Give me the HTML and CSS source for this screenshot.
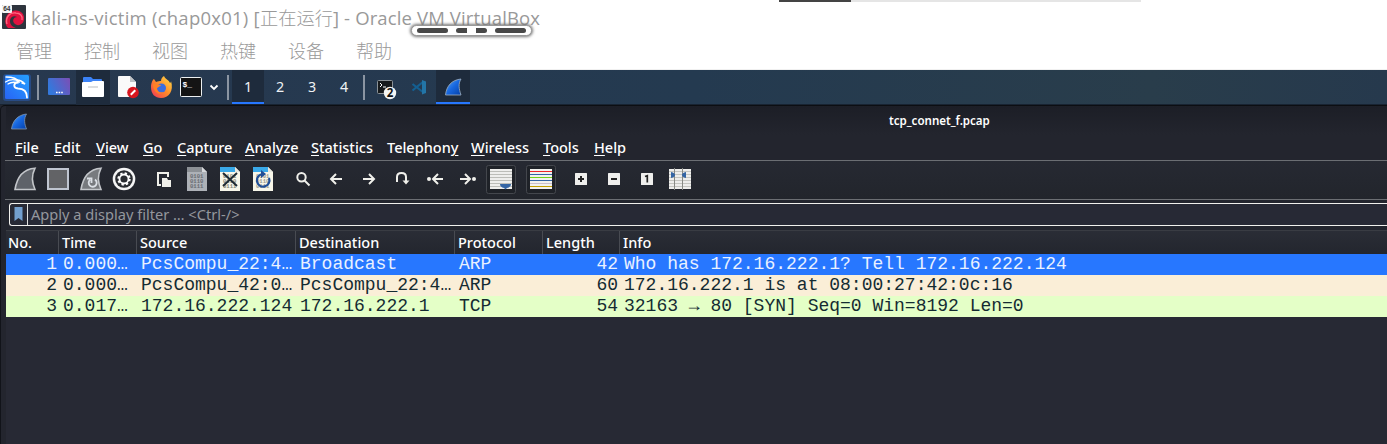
FILE: index.html
```html
<!DOCTYPE html>
<html lang="zh-CN">
<head>
<meta charset="utf-8">
<title>kali-ns-victim</title>
<link rel="stylesheet" href="styles.css">
</head>
<body>
<svg class="defs" width="0" height="0">
  <defs>
    <linearGradient id="blue" x1="0" y1="0" x2="1" y2="1"><stop offset="0" stop-color="#5aa5f2"/><stop offset=".5" stop-color="#1767df"/><stop offset="1" stop-color="#0540a8"/></linearGradient>
    <linearGradient id="kali" x1="0" y1="1" x2="1" y2="0"><stop offset="0" stop-color="#2864f5"/><stop offset="1" stop-color="#25a0ff"/></linearGradient>
    <linearGradient id="desk" x1="0" y1="0.4" x2="1" y2="0"><stop offset="0" stop-color="#3478dc"/><stop offset="1" stop-color="#7c4eb5"/></linearGradient>
    <linearGradient id="fox" x1="1" y1="0" x2="0" y2="1"><stop offset="0" stop-color="#ffe14a"/><stop offset=".5" stop-color="#ff8a2a"/><stop offset="1" stop-color="#f0305c"/></linearGradient>
    <g id="bits" font-family="Liberation Mono" font-size="5.6" font-weight="bold"><text x="10" y="15">0101</text><text x="10" y="19.8">0110</text><text x="10" y="24.6">0111</text></g>
  </defs>
</svg>

<header class="host">
  <div class="progress"><div class="progress-done"></div></div>
  <div class="host-title">
    <svg width="24" height="24" viewBox="0 0 24 24"><rect width="24" height="24" rx="1" fill="#2e343d"/><path d="M6 23C1 18 3 8 11 6c7-2 12 3 11 9-1 5-7 7-10 3-2-3 0-6 3-6-3-2-7 0-7 4s3 6 6 7z" fill="#e0123f"/><path d="M5 19C3 12 8 7 14 8c4 0 7 3 6 7" fill="none" stroke="#ff6680" stroke-width="1.4"/><rect width="10" height="8" rx="1" fill="#f4f4f4"/><text x="1.2" y="6.3" font-family="Liberation Sans" font-weight="bold" font-size="6.5" fill="#333">64</text></svg>
    <span class="host-name"><span class="t1">kali-ns-victim (chap0x01) [</span><span class="t2">正在运行</span><span class="t3">] - Oracle VM VirtualBox</span></span>
  </div>
  <nav class="host-menu"><span>管理</span><span>控制</span><span>视图</span><span>热键</span><span>设备</span><span>帮助</span></nav>
  <div class="grip"><i></i><i class="mid"></i><i></i></div>
</header>

<div class="panel">
  <svg class="apps" width="228" height="35" viewBox="0 0 228 35">
    <rect x="76" width="34" height="35" fill="#1e2b3c"/>
    <rect x="3" y="4" width="28" height="27" rx="3" fill="#2b78ff" opacity=".3"/>
    <rect x="5" y="5" width="24" height="24" rx="1.5" fill="url(#kali)"/>
    <g fill="none" stroke="#fff" stroke-linecap="round"><path d="M6 7c6 0 11 1 13 5M5.500 12c5-3 10-3 14 0M8 14c3-2 7-2 10-1" stroke-width="1.3"/><path d="M18 12c-5 1-5 6 0 6.500 6 0 9 3 9 9" stroke-width="1.8"/><path d="M17 10c3 0 5 1 8 4l-3-1" stroke-width="1.5"/></g>
    <path d="M38 5v25" stroke="#8b95a2" stroke-width="2"/>
    <rect x="48" y="8" width="22" height="17" rx="1" fill="url(#desk)"/><path d="M56 22.500h1.600m1 0h1.600m1 0h1.600" stroke="#fff" stroke-width="1.5"/>
    <path d="M83 17V8q0-1 1-1h7l2 2h8q1 0 1 1v7z" fill="#3b82f6"/><path d="M82 13q0-1 1-1h8l2-1h10q1 0 1 1v14q0 1-1 1H83q-1 0-1-1z" fill="#fff"/><path d="M88 17h10" stroke="#c9cdd0" stroke-width="1.3"/>
    <path d="M119 6h11l6 6v14q0 1-1 1h-16q-1 0-1-1V7q0-1 1-1z" fill="#fafafa"/><path d="M130 6v6h6z" fill="#bfc2c5"/><circle cx="133" cy="22.500" r="5.800" fill="#d9161f"/><path d="m130.800 24.700 4.500-4.500" stroke="#fff" stroke-width="2"/>
    <path d="M151 17c0-4 2-8 3-8l2 3c2-1 4-1 5-1 0-2 1-4 3-5 1 3 5 4 6 7 1-1 1-1 1-2 3 10-2 17-10 17-6 0-10-4-10-11z" fill="url(#fox)"/><circle cx="161.500" cy="18" r="4.500" fill="#3a6de0"/><path d="M153 14c3-1 5 1 8 1-1 2-4 2-4 4 0 3 4 4 7 3-5 4-11 0-11-8z" fill="#ff8125"/>
    <rect x="180.500" y="7.500" width="21" height="19" rx="1" fill="#141414" stroke="#edf0f1"/><text x="182.500" y="16.500" font-family="Liberation Mono" font-weight="bold" font-size="8" fill="#fff">$_</text>
    <path d="m210.500 15.500 3.500 3.500 3.500-3.500" fill="none" stroke="#fff" stroke-width="1.8"/>
    <path d="M228 5v25" stroke="#8b95a2" stroke-width="2"/>
  </svg>
  <div class="workspaces"><span class="active">1</span><span>2</span><span>3</span><span>4</span></div>
  <svg width="110" height="35" viewBox="362 0 110 35">
    <path d="M364 5v25" stroke="#8b95a2" stroke-width="2"/>
    <rect x="377.500" y="10.500" width="15" height="13" rx="1" fill="#171a1c" stroke="#8c9398"/><path d="m380 13 2 2-2 2m3 0h3" fill="none" stroke="#fff"/><circle cx="390" cy="23" r="6.200" fill="#f5f6f4"/><text x="390" y="27.300" text-anchor="middle" font-family="Noto Sans" font-weight="bold" font-size="11.500" fill="#111">2</text>
    <path d="m412.500 14 11 8.500M412.500 20.500l11-9" fill="none" stroke="#145f91" stroke-width="2.200"/><path d="m422 10 4 1.500v11.500l-4 1.500z" fill="#2375a7"/>
    <rect x="436" width="34" height="35" fill="#1e2b3c"/><rect x="436" y="32" width="34" height="2" fill="#2777ff"/>
    <path d="M445.500 25c1-9 6-15 15.500-16-3 5-2 10 0 16z" fill="url(#blue)" stroke="#9fb0c0" stroke-width=".8"/>
  </svg>
</div>

<main class="window">
  <div class="titlebar"><svg width="18" height="18" viewBox="0 0 18 18"><path d="M1.500 17c1-8 6-14 15-15-3 5-2 10 0 15z" fill="url(#blue)" stroke="#8195ac" stroke-width=".8"/></svg><span>tcp_connet_f.pcap</span></div>
  <nav class="menu">
    <span style="width:39px"><u>F</u>ile</span><span style="width:42px"><u>E</u>dit</span><span style="width:47px"><u>V</u>iew</span><span style="width:34px"><u>G</u>o</span><span style="width:68px"><u>C</u>apture</span><span style="width:66px"><u>A</u>nalyze</span><span style="width:76px"><u>S</u>tatistics</span><span style="width:84px">Telephon<u>y</u></span><span style="width:72px"><u>W</u>ireless</span><span style="width:51px"><u>T</u>ools</span><span style="width:40px"><u>H</u>elp</span>
  </nav>
  <div class="toolbar">
    <div class="group">
      <svg viewBox="0 0 33 33"><path d="M7 26.500C9 14 15 6 27 5.200c-4 8-3 14 0 21.300z" fill="#5e6269" stroke="#c3c6ca" stroke-width="1.600"/></svg>
      <svg viewBox="0 0 33 33"><rect x="7" y="6" width="20" height="20" fill="#626366" stroke="#bfc5d0" stroke-width="2"/></svg>
      <svg viewBox="0 0 33 33"><path d="M7 26.500C9 14 15 6 27 5.200c-4 8-3 14 0 21.300z" fill="#777a7e" stroke="#c3c6ca" stroke-width="1.600"/><path d="M21 16.500a4 4 0 1 1-5 .3M13 15.500h4.500V20" fill="none" stroke="#dce0e6" stroke-width="1.800"/></svg>
      <svg viewBox="0 0 33 33"><circle cx="17" cy="16" r="11.300" fill="#f5f5f5"/><circle cx="17" cy="16" r="8.800" fill="#292c31"/><circle cx="17" cy="16" r="5.700" fill="none" stroke="#fff" stroke-width="2" stroke-dasharray="2.300 2.177"/><circle cx="17" cy="16" r="4.500" fill="none" stroke="#fff" stroke-width="1.800"/></svg>
    </div>
    <div class="group">
      <svg viewBox="0 0 33 33"><path d="M14 22h-3V10h10v4" fill="none" stroke="#efefe9" stroke-width="2"/><path d="M15 15h5l1 2h3v7h-9z" fill="#efefe9"/></svg>
      <svg viewBox="0 0 33 33"><path d="M7 4h15l5 5v19H7z" fill="#adb1b7"/><path d="M7 4h15v5H7z" fill="#8c9095"/><path d="M22 4v5h5z" fill="#d7d9dc"/><use href="#bits" fill="#686c72"/></svg>
      <svg viewBox="0 0 33 33"><path d="M7 4h15l5 5v19H7z" fill="#f7f6e9"/><path d="M7 4h15v5H7z" fill="#3aa9e8"/><path d="M22 4v5h5z" fill="#e6e7df"/><use href="#bits" fill="#858677"/><path d="m10 10 14 13m0-13L10 23" stroke="#1e2a33" stroke-width="2"/></svg>
      <svg viewBox="0 0 33 33"><path d="M7 4h15l5 5v19H7z" fill="#f7f6e9"/><path d="M7 4h15v5H7z" fill="#3aa9e8"/><path d="M22 4v5h5z" fill="#e6e7df"/><use href="#bits" fill="#9b9b8f"/><path d="M23 15a6.300 6.300 0 1 1-6-4" fill="none" stroke="#214f96" stroke-width="2.200"/><path d="m15 7 5 4-5 4z" fill="#214f96"/></svg>
    </div>
    <div class="group white">
      <svg viewBox="0 0 33 33"><circle cx="15.500" cy="14.300" r="4.200"/><path d="m18.500 17.500 5 5"/></svg>
      <svg viewBox="0 0 33 33"><path d="M23 16H12m5-5-5 5 5 5"/></svg>
      <svg viewBox="0 0 33 33"><path d="M11 16h11m-5-5 5 5-5 5"/></svg>
      <svg viewBox="0 0 33 33"><path d="M12 19v-5q0-4 4.500-4t4.500 4v6"/><path d="M17.500 17.500h7L21 21.500z" class="solid"/></svg>
      <svg viewBox="0 0 33 33"><path d="M25 16H15m5-5-5 5 5 5"/><circle cx="11" cy="16" r="2" class="solid"/></svg>
      <svg viewBox="0 0 33 33"><path d="M9 16h10m-5-5 5 5-5 5"/><circle cx="23" cy="16" r="2" class="solid"/></svg>
      <svg viewBox="0 0 33 33" class="button"><rect x="2.500" y="2.500" width="29" height="28" rx="2" class="frame"/><rect x="6" y="6" width="22" height="20" fill="#eeeeec"/><path d="M6 8.500h22M6 11.500h22M6 14.500h22M6 17.500h22M6 20.500h22M6 23.500h22" stroke="#bcbdb8" stroke-width="1"/><path d="M16 21h11q0 3-4 4l-1.500 1.500L20 25q-4-1-4-4z" fill="#3465a4"/></svg>
    </div>
    <div class="group">
      <svg viewBox="0 0 33 33" class="button"><rect x="2.500" y="2.500" width="29" height="28" rx="2" class="frame"/><rect x="6" y="6" width="22" height="20" fill="#f2f2ef"/><path d="M6 8.500h22" stroke="#ef2929"/><path d="M6 11.500h22M6 17.500h22" stroke="#3465a4"/><path d="M6 14.500h22" stroke="#73d216"/><path d="M6 20.500h22" stroke="#75507b" opacity=".3"/><path d="M6 23.500h22" stroke="#c4a000"/></svg>
    </div>
    <div class="group">
      <svg viewBox="0 0 33 33"><rect x="11" y="10" width="12" height="12" rx=".5" fill="#efefed"/><path d="M14 16h6m-3-3v6" stroke="#222" stroke-width="2"/></svg>
      <svg viewBox="0 0 33 33"><rect x="11" y="10" width="12" height="12" rx=".5" fill="#efefed"/><path d="M14 16h6" stroke="#222" stroke-width="2"/></svg>
      <svg viewBox="0 0 33 33"><rect x="11" y="10" width="12" height="12" rx=".5" fill="#efefed"/><path d="m15 13.500 2.300-.8V19.500" fill="none" stroke="#222" stroke-width="1.700"/></svg>
      <svg viewBox="0 0 33 33"><rect x="6" y="6" width="22" height="20" fill="#eeeeec"/><path d="M6 8.500h22M6 11.500h22M6 14.500h22M6 17.500h22M6 20.500h22M6 23.500h22" stroke="#c5c6c1"/><path d="M11.500 5v22m8-22v22" stroke="#888a85"/><path d="M8 9q4 1 4 3t-4 3zm15 0q-4 1-4 3t4 3z" fill="#3465a4"/></svg>
    </div>
  </div>
  <div class="filter"><div class="filter-box"><div class="bookmark"><svg width="9" height="15" viewBox="0 0 9 15"><path d="M.500 0h8v14l-4-3-4 3z" fill="#729fcf"/></svg></div><span>Apply a display filter … &lt;Ctrl-/&gt;</span></div></div>
  <section class="packets">
    <div class="row head"><span>No.</span><span>Time</span><span>Source</span><span>Destination</span><span>Protocol</span><span>Length</span><span>Info</span></div>
    <div class="row selected"><span>1</span><span>0.000…</span><span>PcsCompu_22:4…</span><span>Broadcast</span><span>ARP</span><span>42</span><span>Who has 172.16.222.1? Tell 172.16.222.124</span></div>
    <div class="row arp"><span>2</span><span>0.000…</span><span>PcsCompu_42:0…</span><span>PcsCompu_22:4…</span><span>ARP</span><span>60</span><span>172.16.222.1 is at 08:00:27:42:0c:16</span></div>
    <div class="row tcp"><span>3</span><span>0.017…</span><span>172.16.222.124</span><span>172.16.222.1</span><span>TCP</span><span>54</span><span>32163 → 80 [SYN] Seq=0 Win=8192 Len=0</span></div>
  </section>
</main>
</body>
</html>
```
FILE: styles.css
```css
* { box-sizing: border-box; }
body { margin: 0; width: 1387px; height: 444px; overflow: hidden; background: #23262f; font-family: "Noto Sans", sans-serif; }
svg { display: block; flex: none; }
.defs { position: absolute; }

.host { position: relative; height: 70px; background: #fff; border-bottom: 1px solid #f0f0f0; color: #999; font-family: "Open Sans", "Noto Sans CJK SC", sans-serif; }
.progress { width: 362px; height: 2px; margin-left: 779px; background: #e5e5e5; }
.progress-done { width: 72px; height: 2px; background: #444; }
.host-title { display: flex; height: 32px; padding: 3px 0 0 2px; }
.host-name { display: flex; margin-left: 5px; line-height: 25px; white-space: nowrap; font-size: 18.5px; }
.host-name span { flex: none; }
.t1 { width: 229px; letter-spacing: .24px; }
.t2 { width: 73px; font-family: "Noto Sans CJK SC", sans-serif; font-weight: 300; font-size: 18.3px; }
.t3 { letter-spacing: .13px; }
.host-menu { display: flex; gap: 32px; padding-left: 16px; height: 35px; font: 300 18px/32px "Noto Sans CJK SC", sans-serif; }
.host-menu span { width: 36px; white-space: nowrap; }
.grip { position: absolute; left: 411px; top: 25px; width: 121px; height: 11px; display: flex; align-items: center; justify-content: center; gap: 8px; background: #fff; border: 1px solid #999; border-radius: 6px; box-shadow: 0 0 3px 1px #777; }
.grip i { width: 31px; height: 5px; border-radius: 3px; background: #484848; }
.grip .mid { background: linear-gradient(90deg, #484848 11px, #fff 11px 20px, #484848 20px); }

.panel { display: flex; height: 35px; background: linear-gradient(90deg, #27384f, #243a50 50%, #293d4b 83%, #26394d); border-bottom: 1px solid #182331; }
.apps { overflow: visible; }
.workspaces { display: flex; width: 134px; padding-left: 4px; color: #f0f2f4; font-size: 14.3px; line-height: 33px; }
.workspaces span { width: 32px; height: 34px; text-align: center; }
.workspaces .active { background: #1e2b3c; border-bottom: 2px solid #2777ff; }

.window { height: 339px; padding-left: 5px; border-top: 1px solid #0c0e12; border-left: 1px solid #111319; background: #23252e; color: #fff; border-radius: 5px 0 0; }
.titlebar { display: flex; align-items: center; height: 29px; padding-left: 4px; background: linear-gradient(#1c1e26, #23252e); font-size: 11.55px; font-weight: 600; }
.titlebar span { margin-left: 861px; }
.menu { display: flex; height: 25px; padding-left: 9px; font-size: 14.5px; line-height: 25px; font-weight: 500; }
.menu span { flex: none; white-space: nowrap; }
.menu u { text-underline-offset: 2px; text-decoration-thickness: 1px; }
.toolbar { display: flex; gap: 7px; height: 40px; margin-left: -1px; padding: 2px 0 0 3px; border-top: 1px solid #6b6e73; border-bottom: 1px solid #6b6e73; background: linear-gradient(#262932, #22252c); }
.group { display: flex; }
.group svg { width: 33px; height: 33px; }
.white svg:not(.button) { fill: none; stroke: #f0f0eb; stroke-width: 2; }
.white .solid { fill: #f0f0eb; stroke: none; }
.frame { fill: #1f2228; stroke: #44474d; }
.filter { height: 31px; padding: 3px 0 0 3px; border-bottom: 1px solid #393c43; background: #23252e; }
.filter-box { display: flex; height: 23px; border: 1px solid #f0f0ed; border-right: 0; border-radius: 3px 0 0 3px; background: #272935; color: #94979d; font-size: 14.6px; line-height: 21px; }
.bookmark { width: 18px; padding: 3px 0 0 4px; border-right: 1px solid #e1e1df; }
.filter-box span { margin-left: 3px; }

.packets { height: 214px; background: #272934; font: 18px/21px "Liberation Mono", monospace; }
.row { display: grid; grid-template-columns: 53px 78px 159px 159px 88px 77px 1fr; height: 21px; color: #142b32; white-space: pre; }
.row span { padding-left: 4px; overflow: hidden; }
.row span:first-child, .row span:nth-child(6) { text-align: right; padding: 0 2px 0 0; }
.head { height: 23px; font: 500 14.5px/22px "Noto Sans", sans-serif; color: #fff; background: linear-gradient(#2a2d36, #23262e); }
.head span, .head span:first-child, .head span:nth-child(6) { text-align: left; padding: 0 0 0 3px; border-right: 1px solid #484b52; }
.head span:first-child { padding-left: 2px; }
.head span:last-child { border-right: 0; }
.selected { background: #2777ff; color: #e9f1ff; }
.arp { background: #faeed7; }
.tcp { background: #e4ffc7; }
```
